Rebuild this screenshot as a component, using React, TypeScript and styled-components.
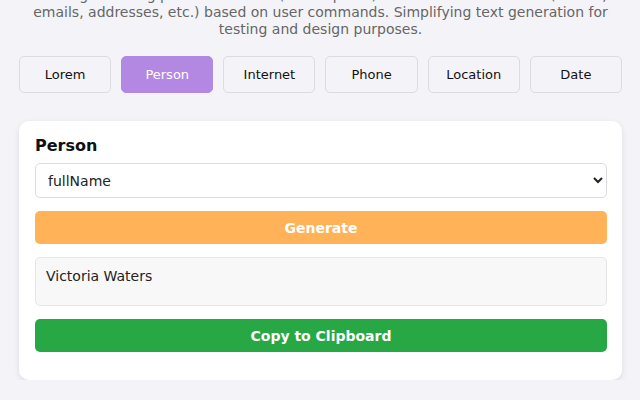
import React, { useState } from "react";
import styled, { createGlobalStyle } from "styled-components";

const GlobalStyle = createGlobalStyle`
    html, body {
        margin: 0;
        padding: 0;
        background: #f4f4f8;
        font-family: Verdana, "DejaVu Sans", sans-serif;
        overflow: hidden;
    }
    * {
        box-sizing: border-box;
    }
`;

const categories = ["Lorem", "Person", "Internet", "Phone", "Location", "Date"];

const App = () => {
    const [active, setActive] = useState("Person");

    return (
        <>
            <GlobalStyle />
            <Page>
                <Intro>
                    A tool generating placeholder text (lorem ipsum) and realistic mock data (names,
                    emails, addresses, etc.) based on user commands. Simplifying text generation for testing
                    and design purposes.
                </Intro>
                <Tabs>
                    {categories.map((c) => (
                        <Tab key={c} $active={c === active} onClick={() => setActive(c)}>
                            {c}
                        </Tab>
                    ))}
                </Tabs>
                <Card>
                    <CardTitle>{active}</CardTitle>
                    <Select defaultValue="fullName">
                        <option value="fullName">fullName</option>
                        <option value="firstName">firstName</option>
                        <option value="lastName">lastName</option>
                        <option value="jobTitle">jobTitle</option>
                    </Select>
                    <ActionButton $color="#ffb257">Generate</ActionButton>
                    <Output>Victoria Waters</Output>
                    <ActionButton $color="#28a745">Copy to Clipboard</ActionButton>
                </Card>
            </Page>
        </>
    );
};

export default App;

const Page = styled.div`
    width: 603px;
    margin-left: 19px;
`;

const Intro = styled.p`
    width: 600px;
    margin: -13px auto 0;
    text-align: center;
    color: #666;
    font-size: 14px;
    line-height: 17px;
`;

const Tabs = styled.div`
    display: grid;
    grid-template-columns: repeat(6, 1fr);
    gap: 10px;
    margin-top: 18px;
`;

const Tab = styled.button<{ $active: boolean }>`
    height: 37px;
    border: 1px solid ${({ $active }) => ($active ? "#b388e3" : "#dcdce0")};
    border-radius: 5px;
    background: ${({ $active }) => ($active ? "#b388e3" : "#f4f4f8")};
    color: ${({ $active }) => ($active ? "#fff" : "#111")};
    font-family: Verdana, "DejaVu Sans", sans-serif;
    font-size: 13px;
    cursor: pointer;
`;

const Card = styled.div`
    display: flex;
    flex-direction: column;
    gap: 13px;
    margin-top: 28px;
    padding: 14px 15px 28px 16px;
    background: #fff;
    border-radius: 10px;
    box-shadow: 0 2px 6px rgba(0, 0, 0, 0.1);
`;

const CardTitle = styled.h3`
    margin: 0 0 -7px;
    font-size: 16px;
    line-height: 22px;
    font-weight: bold;
    color: #111;
`;

const Select = styled.select`
    height: 35px;
    padding: 0 8px;
    border: 1px solid #dcdce0;
    border-radius: 5px;
    background: #fff;
    color: #222;
    font-family: Verdana, "DejaVu Sans", sans-serif;
    font-size: 14px;
`;

const ActionButton = styled.button<{ $color: string }>`
    height: 33px;
    border: none;
    border-radius: 5px;
    background: ${({ $color }) => $color};
    color: #fff;
    font-family: Verdana, "DejaVu Sans", sans-serif;
    font-size: 14px;
    font-weight: bold;
    cursor: pointer;
`;

const Output = styled.div`
    height: 49px;
    padding: 8px 10px;
    border: 1px solid #e6e6e8;
    border-radius: 5px;
    background: #f8f8f9;
    color: #222;
    font-size: 14px;
    line-height: 20px;
`;
